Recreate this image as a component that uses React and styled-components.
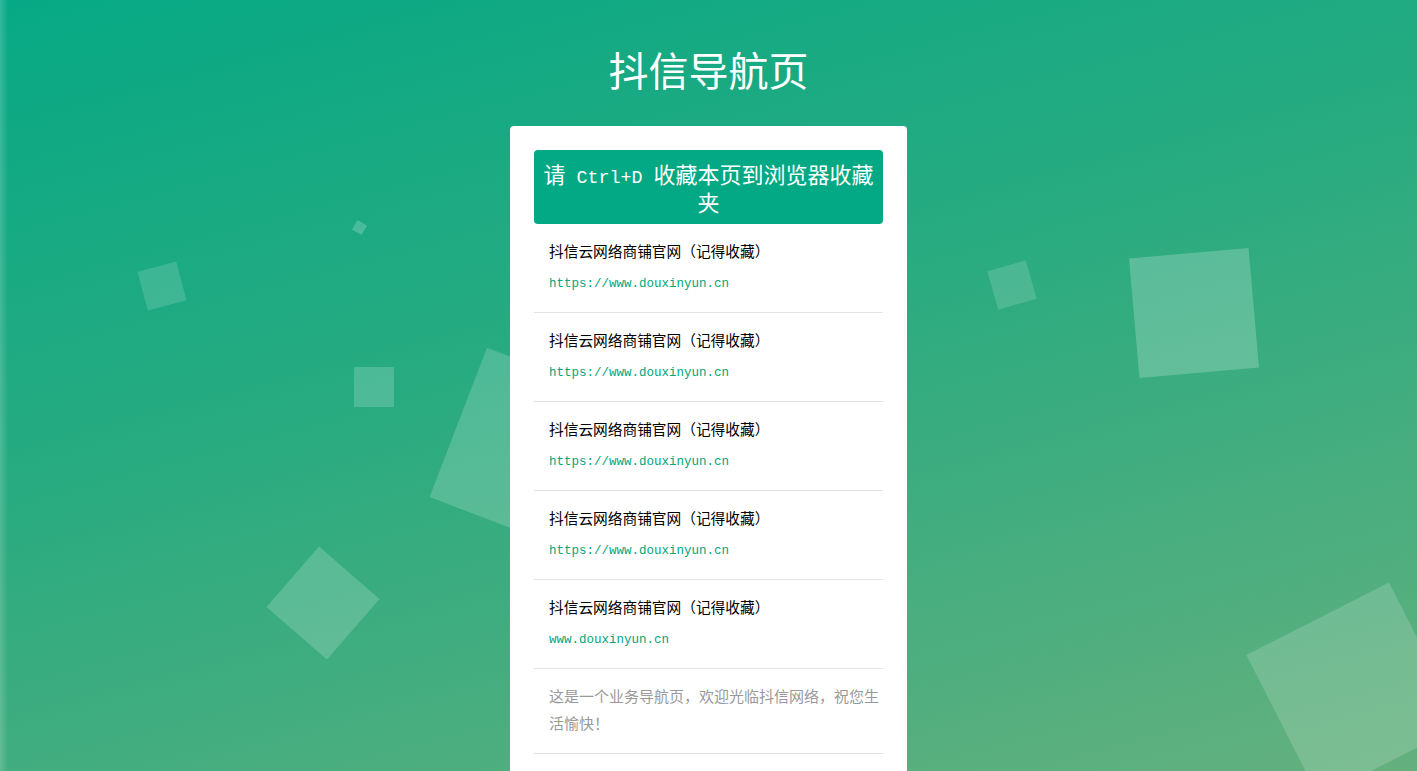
import React from 'react';
import styled, { createGlobalStyle } from 'styled-components';

const GlobalStyle = createGlobalStyle`
  html, body {
    margin: 0;
    padding: 0;
  }
  body {
    font-family: 'Noto Sans CJK SC', 'Noto Sans', sans-serif;
  }
  * {
    box-sizing: border-box;
  }
`;

const LINKS = [
  { name: '抖信云网络商铺官网（记得收藏）', url: 'https://www.douxinyun.cn' },
  { name: '抖信云网络商铺官网（记得收藏）', url: 'https://www.douxinyun.cn' },
  { name: '抖信云网络商铺官网（记得收藏）', url: 'https://www.douxinyun.cn' },
  { name: '抖信云网络商铺官网（记得收藏）', url: 'https://www.douxinyun.cn' },
  { name: '抖信云网络商铺官网（记得收藏）', url: 'www.douxinyun.cn' },
];

// decorative squares: centre x/y, side, rotation, opacity
const BUBBLES = [
  { x: 359, y: 227, size: 11, rot: 30, alpha: 0.2 },
  { x: 162, y: 286, size: 40, rot: -15, alpha: 0.15 },
  { x: 374, y: 387, size: 40, rot: 0, alpha: 0.18 },
  { x: 533, y: 451, size: 160, rot: 21, alpha: 0.18 },
  { x: 323, y: 603, size: 80, rot: 41, alpha: 0.18 },
  { x: 1012, y: 285, size: 40, rot: -16, alpha: 0.15 },
  { x: 1194, y: 313, size: 120, rot: -5, alpha: 0.21 },
  { x: 1354, y: 690, size: 160, rot: -27, alpha: 0.17 },
];

function App() {
  return (
    <>
      <GlobalStyle />
      <Page>
        <Bubbles>
          {BUBBLES.map((b, i) => (
            <Bubble
              key={i}
              $size={b.size}
              $rot={b.rot}
              $alpha={b.alpha}
              style={{ left: b.x - b.size / 2, top: b.y - b.size / 2 }}
            />
          ))}
        </Bubbles>

        <Main>
          <Title>抖信导航页</Title>
          <Card>
            <Notice>
              请<Mono> Ctrl+D </Mono>收藏本页到浏览器收藏夹
            </Notice>
            <List>
              {LINKS.map((l, i) => (
                <Item key={i}>
                  <ItemName>{l.name}</ItemName>
                  <ItemUrl href="#">{l.url}</ItemUrl>
                </Item>
              ))}
            </List>
            <Footer>这是一个业务导航页，欢迎光临抖信网络，祝您生活愉快！</Footer>
          </Card>
        </Main>
      </Page>
    </>
  );
}

const Page = styled.div`
  position: relative;
  height: 100vh;
  overflow: hidden;
  background: linear-gradient(165deg, #06a985 0%, #2aab80 45%, #64b07e 100%);

  &::before {
    content: '';
    position: absolute;
    left: 0;
    top: 0;
    bottom: 0;
    width: 8px;
    background: linear-gradient(to right, rgba(255, 255, 255, 0.18), rgba(255, 255, 255, 0));
    z-index: 1;
  }
`;

const Bubbles = styled.ul`
  position: absolute;
  inset: 0;
  margin: 0;
  padding: 0;
  list-style: none;
`;

const Bubble = styled.li`
  position: absolute;
  width: ${(p) => p.$size}px;
  height: ${(p) => p.$size}px;
  background: rgba(255, 255, 255, ${(p) => p.$alpha});
  transform: rotate(${(p) => p.$rot}deg);
`;

const Main = styled.main`
  position: relative;
  z-index: 2;
  display: flex;
  flex-direction: column;
  align-items: center;
  padding-top: 41px;
`;

const Title = styled.h1`
  margin: 0;
  font-size: 40px;
  line-height: 56px;
  font-weight: 400;
  color: #fff;
`;

const Card = styled.section`
  margin-top: 29px;
  width: 397px;
  background: #fff;
  border-radius: 4px;
  padding: 24px;
`;

const Notice = styled.div`
  background: #02a984;
  border-radius: 4px;
  padding: 10px 8px 9px;
  color: #fff;
  font-size: 22px;
  line-height: 27px;
  text-align: center;
`;

const Mono = styled.span`
  font-family: 'Liberation Mono', monospace;
  font-size: 18.33px;
  line-height: 1;
`;

const List = styled.ul`
  margin: 0;
  padding: 0;
  list-style: none;
`;

const Item = styled.li`
  display: flex;
  flex-direction: column;
  padding: 12px 15px 13px;
  border-bottom: 1px solid #e2e2e2;
`;

const ItemName = styled.span`
  font-size: 14.7px;
  line-height: 30px;
  color: #000;
`;

const ItemUrl = styled.a`
  padding-top: 3px;
  font-family: 'Liberation Mono', monospace;
  font-size: 12.5px;
  line-height: 30px;
  color: #00a67c;
  text-decoration: none;
`;

const Footer = styled.p`
  margin: 0;
  padding: 13px 2px 17px 15px;
  font-size: 15px;
  line-height: 27px;
  color: #999;
  border-bottom: 1px solid #e2e2e2;
`;

export default App;
